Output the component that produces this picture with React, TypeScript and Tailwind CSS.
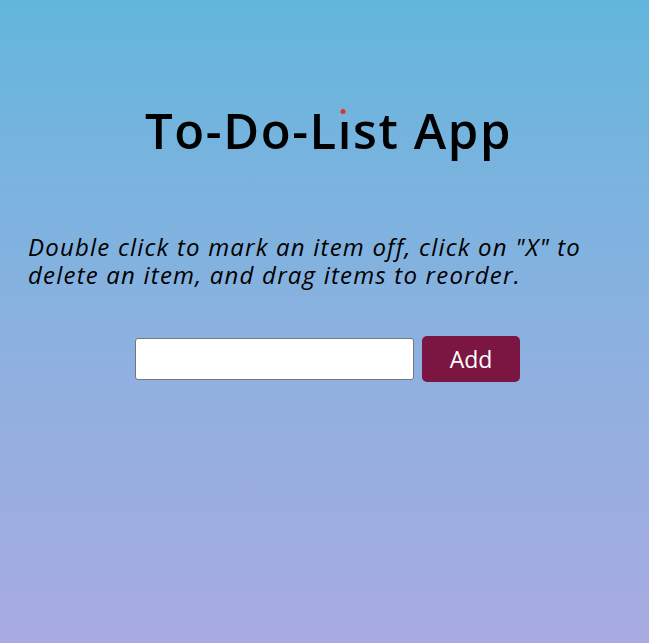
import React, { useState } from "react";

export default function App() {
  const [text, setText] = useState("");

  return (
    <div className="min-h-[643px] w-full bg-gradient-to-b from-[#62b6dd] to-[#a8abe2] font-['Open_Sans',sans-serif] text-black">
      {/* Header */}
      <div className="pt-[100px] pl-[8px] flex justify-center">
        <h1 className="text-[49px] leading-[60px] font-semibold tracking-[1.6px]">
          To-Do-L
          <span className="relative">
            ı
            <span className="absolute left-[5px] top-[12px] -translate-x-1/2 w-[5px] h-[5px] rounded-full bg-[#e0302a]" />
          </span>
          st App
        </h1>
      </div>

      {/* Instructions */}
      <p className="mt-[73px] px-[28px] text-[24px] leading-[28px] italic tracking-[1.2px]">
        Double click to mark an item off, click on "X" to delete an item, and drag items to reorder.
      </p>

      {/* Input row */}
      <div className="mt-[47px] pl-[6px] flex justify-center items-center gap-2">
        <input
          value={text}
          onChange={(e) => setText(e.target.value)}
          className="w-[279px] h-[42px] bg-white border border-[#767676] rounded-[3px] px-2 text-lg outline-none"
        />
        <button className="w-[98px] h-[46px] rounded-[5px] bg-[#7b1542] text-white text-[23px]">
          Add
        </button>
      </div>
    </div>
  );
}
